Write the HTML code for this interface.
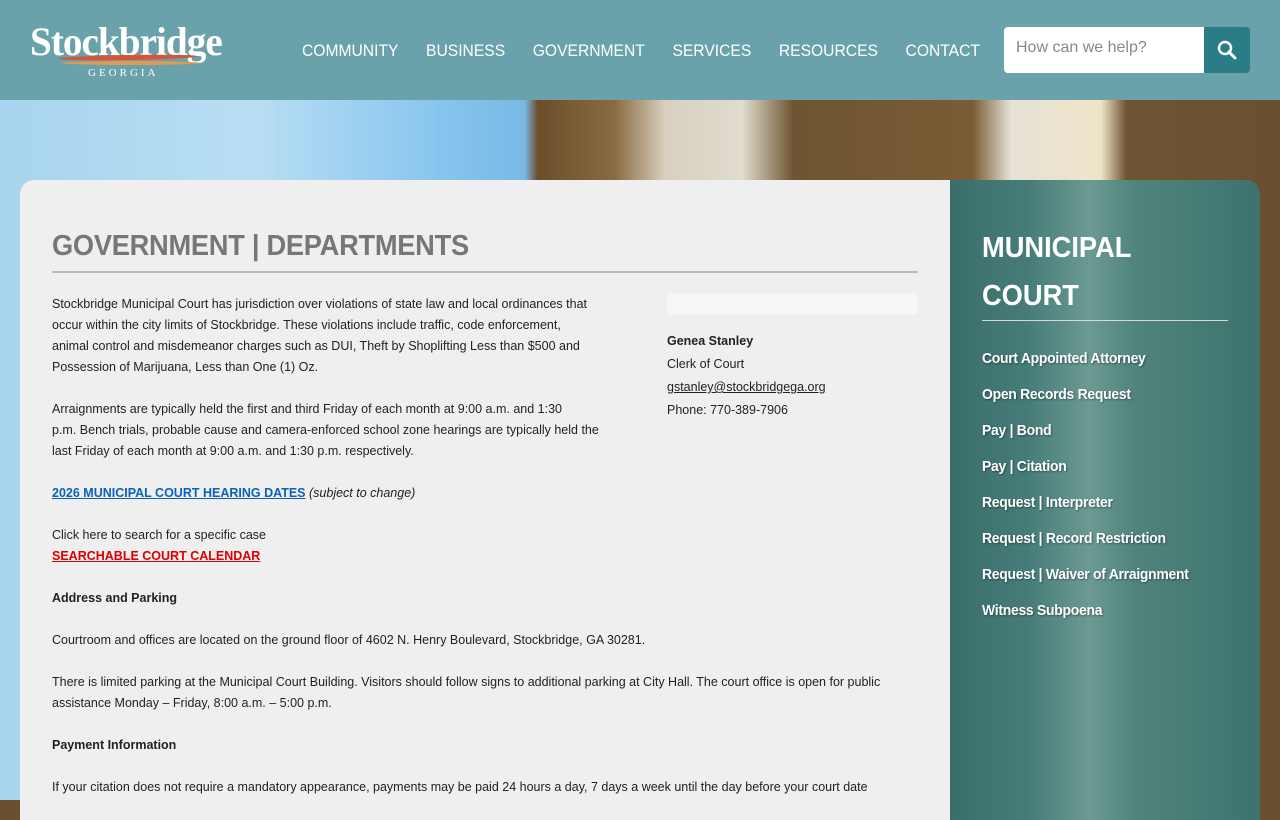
<!DOCTYPE html>
<html><head><meta charset="utf-8"><style>
*{margin:0;padding:0;box-sizing:border-box}
body{width:1280px;height:800px;overflow:hidden;font-family:"Liberation Sans",sans-serif;background:#6b5030;position:relative}
.hdr{position:absolute;left:0;top:0;width:1280px;height:100px;background:#6aa2ab}
.hero{position:absolute;left:0;top:100px;width:1280px;height:700px;background:linear-gradient(90deg,#a8d4ef 0%,#b8def3 20%,#86c4ee 35%,#7ab8e6 41%,#6b4e2a 42%,#8a6a40 48%,#d8d0c0 52%,#e0dccf 58%,#6e5430 62%,#7a5c36 76%,#e6e2d6 79%,#efe4c8 86%,#6e5432 88%,#6a5030 100%)}
.logo{position:absolute;left:30px;top:18px;color:#fff;font-family:"Liberation Serif",serif;font-size:40px;font-weight:bold;letter-spacing:-1px;transform:scaleX(.98);transform-origin:left}
.geo{position:absolute;left:88px;top:67px;color:#fff;font-family:"Liberation Serif",serif;font-size:11px;letter-spacing:3px}
.sw1{position:absolute;left:58px;top:55px;width:140px;height:5px;border-radius:50%;background:#d4553c;transform:rotate(-1deg)}
.sw2{position:absolute;left:62px;top:61px;width:138px;height:4px;border-radius:50%;background:#e19a50}
.nav{position:absolute;top:41px;left:302px;display:flex;gap:30px;color:#fff;font-size:17px;transform:scaleX(.92);transform-origin:left}
.search{position:absolute;left:1004px;top:27px;width:200px;height:46px;background:#fff;border-radius:4px 0 0 4px;color:#888;font-size:16px;padding:12px 12px}
.sbtn{position:absolute;left:1204px;top:27px;width:46px;height:46px;background:#2a7d87;border-radius:0 4px 4px 0}
.main{position:absolute;left:20px;top:180px;width:930px;height:640px;background:#efefef;border-radius:14px 0 0 0}
.side{position:absolute;left:950px;top:180px;width:310px;height:640px;border-radius:0 14px 0 0;background:linear-gradient(90deg,#3a6e6c 0%,#467c78 25%,#6b9a92 45%,#4f837c 60%,#3e736d 100%)}
h1{position:absolute;left:52px;top:230px;font-size:29px;color:#777;font-weight:bold;letter-spacing:-.3px;transform:scaleX(.94);transform-origin:left}
.rule{position:absolute;left:52px;top:271px;width:866px;height:2px;background:#bbb}
.txt{position:absolute;left:52px;top:294px;font-size:12.5px;line-height:21px;color:#222;width:900px}
.txt p{margin-bottom:21px}
a{color:#0b62b8}
.box{position:absolute;left:667px;top:293px;width:251px;height:21px;background:#f6f6f6;border-radius:4px}
.ct{position:absolute;left:667px;top:330px;font-size:12.5px;line-height:23px;color:#222}
.st{position:absolute;left:982px;top:224px;color:#fff;font-size:29px;font-weight:bold;line-height:48px;transform:scaleX(.94);transform-origin:left}
.srule{position:absolute;left:982px;top:320px;width:246px;height:1px;background:#cfdcda}
.sl{position:absolute;left:982px;top:341px;color:#fff;font-size:15px;font-weight:bold;line-height:36px;text-shadow:1px 1px 2px rgba(0,0,0,.4);transform:scaleX(.93);transform-origin:left;letter-spacing:-.3px}
</style></head><body>
<div class="hdr"></div>
<div class="hero"></div>
<div class="logo">Stockbridge</div>
<div class="sw1"></div><div class="sw2"></div>
<div class="geo">GEORGIA</div>
<div class="nav"><span>COMMUNITY</span><span>BUSINESS</span><span>GOVERNMENT</span><span>SERVICES</span><span>RESOURCES</span><span>CONTACT</span></div>
<div class="search">How can we help?</div>
<div class="sbtn"><svg width="46" height="46" viewBox="0 0 46 46"><circle cx="21" cy="21" r="6" fill="none" stroke="#fff" stroke-width="2.5"/><path d="M25 25l6 6" stroke="#fff" stroke-width="3" stroke-linecap="round"/></svg></div>
<div class="main"></div>
<div class="side"></div>
<h1>GOVERNMENT | DEPARTMENTS</h1>
<div class="rule"></div>
<div class="txt">
<p>Stockbridge Municipal Court has jurisdiction over violations of state law and local ordinances that<br>occur within the city limits of Stockbridge. These violations include traffic, code enforcement,<br>animal control and misdemeanor charges such as DUI, Theft by Shoplifting Less than $500 and<br>Possession of Marijuana, Less than One (1) Oz.</p>
<p>Arraignments are typically held the first and third Friday of each month at 9:00 a.m. and 1:30<br>p.m. Bench trials, probable cause and camera-enforced school zone hearings are typically held the<br>last Friday of each month at 9:00 a.m. and 1:30 p.m. respectively.</p>
<p><a href="#"><b>2026 MUNICIPAL COURT HEARING DATES</b></a> <i>(subject to change)</i></p>
<p>Click here to search for a specific case<br><a href="#" style="color:#d00"><b>SEARCHABLE COURT CALENDAR</b></a></p>
<p><b>Address and Parking</b></p>
<p>Courtroom and offices are located on the ground floor of 4602 N. Henry Boulevard, Stockbridge, GA 30281.</p>
<p>There is limited parking at the Municipal Court Building. Visitors should follow signs to additional parking at City Hall. The court office is open for public<br>assistance Monday – Friday, 8:00 a.m. – 5:00 p.m.</p>
<p><b>Payment Information</b></p>
<p>If your citation does not require a mandatory appearance, payments may be paid 24 hours a day, 7 days a week until the day before your court date</p>
</div>
<div class="box"></div>
<div class="ct"><b>Genea Stanley</b><br>Clerk of Court<br><span style="text-decoration:underline">gstanley@stockbridgega.org</span><br>Phone: 770-389-7906</div>
<div class="st">MUNICIPAL<br>COURT</div>
<div class="srule"></div>
<div class="sl">Court Appointed Attorney<br>Open Records Request<br>Pay | Bond<br>Pay | Citation<br>Request | Interpreter<br>Request | Record Restriction<br>Request | Waiver of Arraignment<br>Witness Subpoena</div>
</body></html>
